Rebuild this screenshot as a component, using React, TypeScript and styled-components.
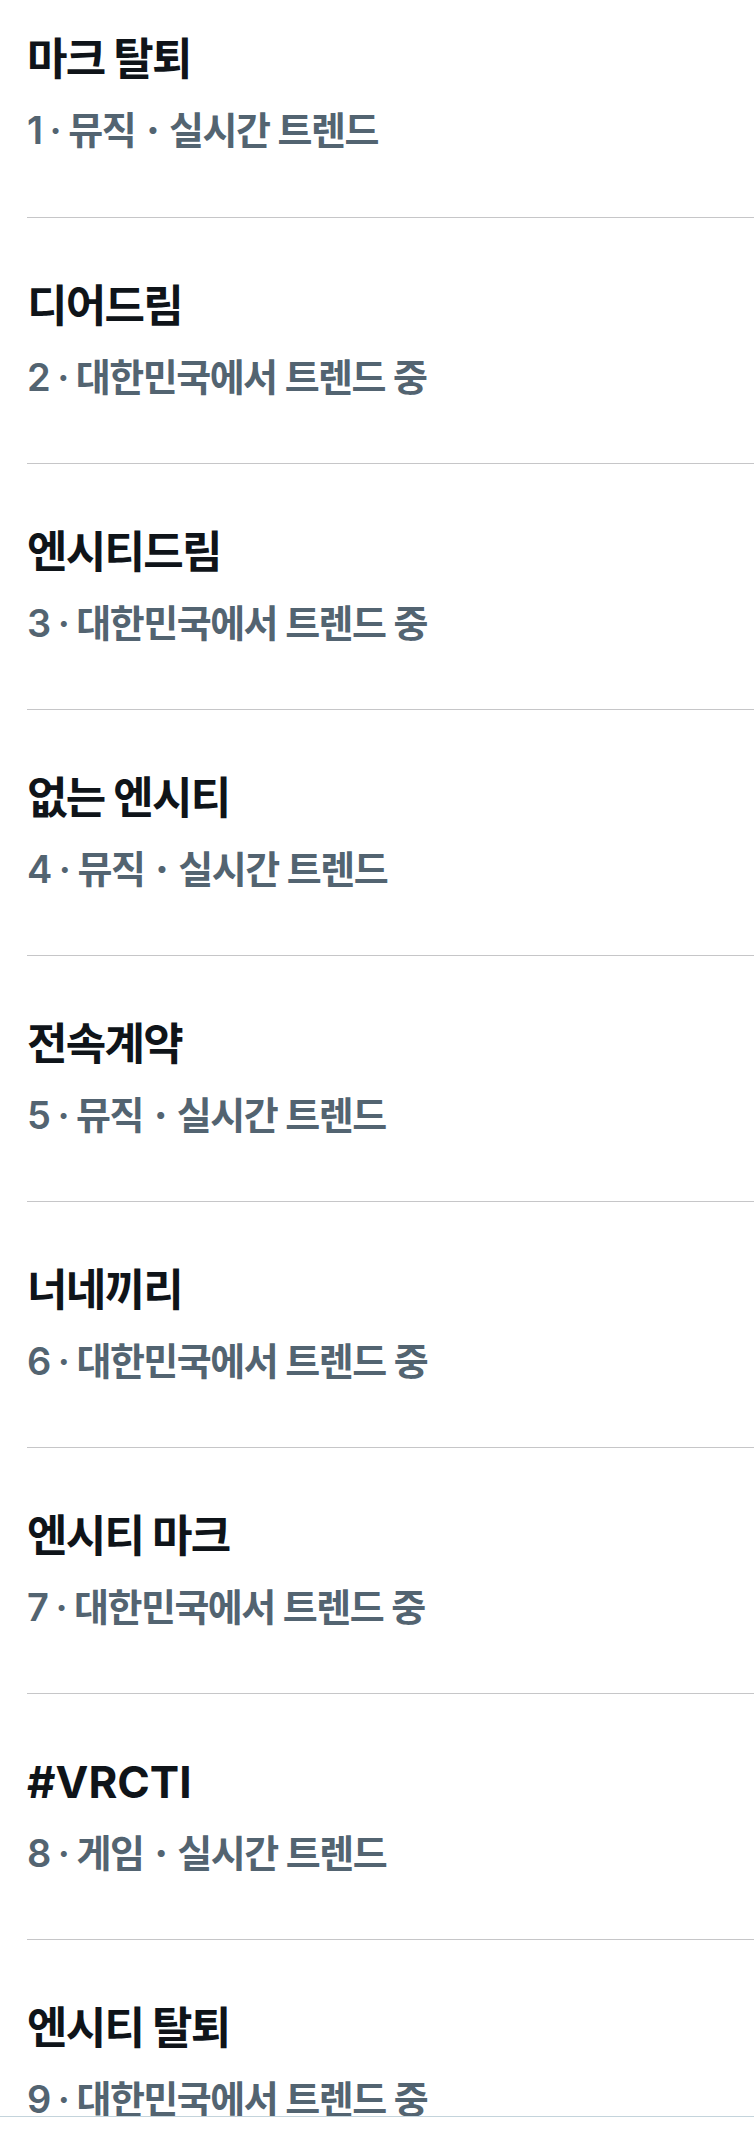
import React from 'react';
import styled, { createGlobalStyle } from 'styled-components';

type Trend = {
  rank: number;
  context: string[];
  title: string;
};

const trends: Trend[] = [
  { rank: 1, context: ['뮤직', '실시간 트렌드'], title: '마크 탈퇴' },
  { rank: 2, context: ['대한민국에서 트렌드 중'], title: '디어드림' },
  { rank: 3, context: ['대한민국에서 트렌드 중'], title: '엔시티드림' },
  { rank: 4, context: ['뮤직', '실시간 트렌드'], title: '없는 엔시티' },
  { rank: 5, context: ['뮤직', '실시간 트렌드'], title: '전속계약' },
  { rank: 6, context: ['대한민국에서 트렌드 중'], title: '너네끼리' },
  { rank: 7, context: ['대한민국에서 트렌드 중'], title: '엔시티 마크' },
  { rank: 8, context: ['게임', '실시간 트렌드'], title: '#VRCTI' },
  { rank: 9, context: ['대한민국에서 트렌드 중'], title: '엔시티 탈퇴' },
];

const isLatin = (text: string) => /^[\x00-\x7f]+$/.test(text);

export default function App() {
  return (
    <>
      <GlobalStyle />
      <TrendList>
        {trends.map((trend) => (
          <TrendItem key={trend.rank}>
            <TrendTitle $latin={isLatin(trend.title)}>{trend.title}</TrendTitle>
            <TrendMeta>
              {trend.rank}
              <Dot>·</Dot>
              {trend.context.map((part, i) => (
                <React.Fragment key={part}>
                  {i > 0 && <Dot $wide>·</Dot>}
                  {part}
                </React.Fragment>
              ))}
            </TrendMeta>
          </TrendItem>
        ))}
      </TrendList>
      <BottomBar />
    </>
  );
}

const GlobalStyle = createGlobalStyle`
  html, body {
    margin: 0;
    padding: 0;
    background: #fff;
  }

  body {
    font-family: Inter, "Noto Sans CJK KR", sans-serif;
    -webkit-font-smoothing: antialiased;
  }
`;

const TrendList = styled.main`
  display: flex;
  flex-direction: column;
  height: 2135px;
  overflow: hidden;
`;

const TrendItem = styled.section`
  flex-shrink: 0;
  margin-left: 27px;
  padding: 62px 0 0;
  height: 246px;
  box-sizing: border-box;
  border-bottom: 1px solid #c6c6c8;

  &:first-child {
    padding-top: 33px;
    height: 218px;
  }
`;

const TrendTitle = styled.div<{ $latin?: boolean }>`
  font-size: 44px;
  line-height: 52px;
  font-weight: 700;
  color: #0f1419;
  letter-spacing: ${(p) => (p.$latin ? '0' : '-1.7px')};
`;

const TrendMeta = styled.div`
  margin-top: 22px;
  font-size: 38px;
  line-height: 46px;
  font-weight: 600;
  color: #536471;
  letter-spacing: -1.5px;
  white-space: nowrap;
`;

const Dot = styled.span<{ $wide?: boolean }>`
  display: inline-block;
  margin: 0 ${(p) => (p.$wide ? '11px' : '8px')};
  font-weight: ${(p) => (p.$wide ? 800 : 600)};
`;

const BottomBar = styled.div`
  position: fixed;
  left: 0;
  right: 0;
  bottom: 0;
  height: 18px;
  background: #fff;
  border-top: 1px solid #c4d4dc;
`;
